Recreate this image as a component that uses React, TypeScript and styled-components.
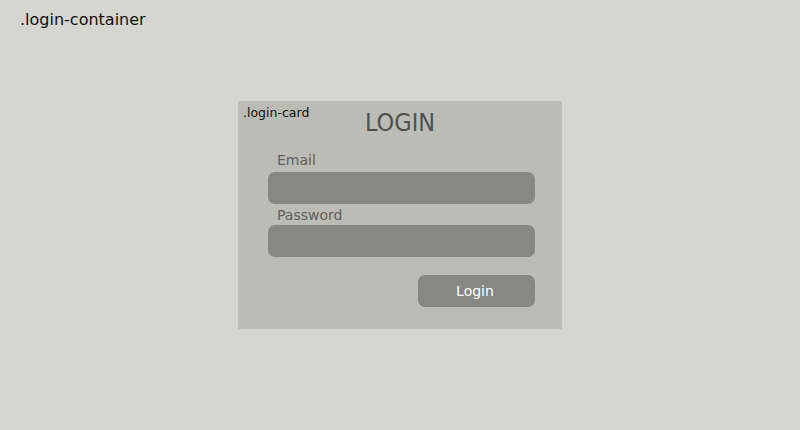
import React from "react";
import styled, { createGlobalStyle } from "styled-components";

const GlobalStyle = createGlobalStyle`
  html, body { margin: 0; padding: 0; }
  body {
    width: 800px;
    height: 430px;
    overflow: hidden;
    background: #d4d6cf;
    font-family: "DejaVu Sans", Verdana, sans-serif;
  }
`;

const Container = styled.div`
  position: relative;
  width: 800px;
  height: 430px;
  display: flex;
  align-items: center;
  justify-content: center;
  background: #d4d6cf;
`;

const Tag = styled.span<{ $size: number; $top: number; $left: number }>`
  position: absolute;
  top: ${(p) => p.$top}px;
  left: ${(p) => p.$left}px;
  font-size: ${(p) => p.$size}px;
  color: #111;
  line-height: normal;
`;

const Card = styled.div`
  position: relative;
  box-sizing: border-box;
  width: 324px;
  height: 228px;
  background: #babcb5;
  padding: 8px 27px 21px 30px;
  display: flex;
  flex-direction: column;
`;

const Title = styled.h1`
  margin: 0;
  font-family: "DejaVu Sans Condensed", "DejaVu Sans", sans-serif;
  font-stretch: condensed;
  font-size: 25px;
  font-weight: normal;
  line-height: 27px;
  text-align: center;
  color: #50514d;
  padding-right: 3px;
`;

const Field = styled.div<{ $mt: number }>`
  display: flex;
  flex-direction: column;
  margin-top: ${(p) => p.$mt}px;
`;

const Label = styled.label<{ $mb: number }>`
  font-size: 14px;
  line-height: 16px;
  color: #5f605c;
  padding-left: 9px;
  margin-bottom: ${(p) => p.$mb}px;
`;

const Input = styled.div`
  height: 32px;
  border-radius: 7px;
  background: #878884;
`;

const Actions = styled.div`
  display: flex;
  justify-content: flex-end;
  margin-top: 18px;
`;

const Button = styled.button`
  width: 117px;
  height: 32px;
  border: none;
  border-radius: 7px;
  background: #878884;
  color: #ffffff;
  font-family: "DejaVu Sans", Verdana, sans-serif;
  font-size: 14px;
  padding: 0 3px 0 0;
`;

export default function App() {
  return (
    <>
      <GlobalStyle />
      <Container>
        <Tag $size={16} $top={10} $left={20}>.login-container</Tag>
        <Card>
          <Tag $size={12.5} $top={4} $left={5}>.login-card</Tag>
          <Title>LOGIN</Title>
          <Field $mt={16}>
            <Label $mb={4}>Email</Label>
            <Input />
          </Field>
          <Field $mt={3}>
            <Label $mb={2}>Password</Label>
            <Input />
          </Field>
          <Actions>
            <Button>Login</Button>
          </Actions>
        </Card>
      </Container>
    </>
  );
}
